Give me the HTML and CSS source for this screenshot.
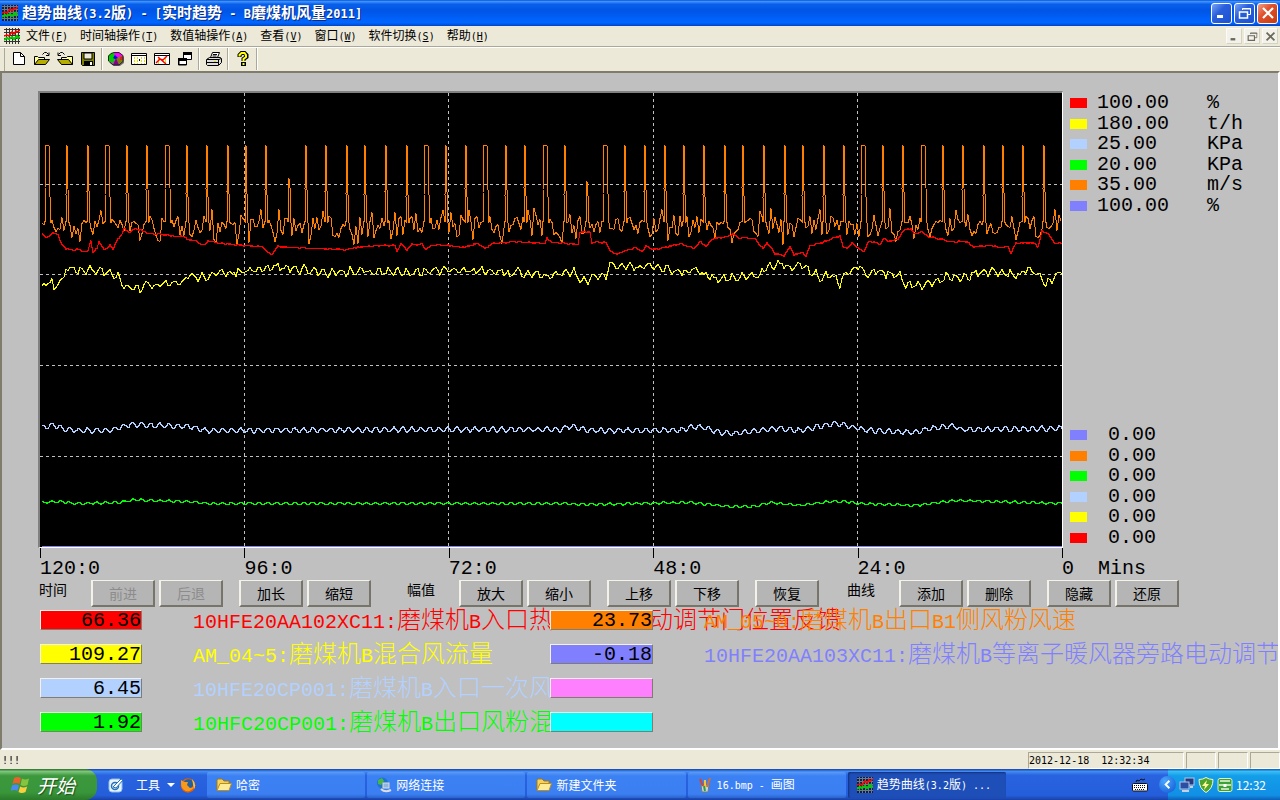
FILE: index.html
```html
<!DOCTYPE html>
<html lang="zh-CN">
<head>
<meta charset="utf-8">
<title>趋势曲线(3.2版)</title>
<link rel="stylesheet" href="styles.css">
</head>
<body>
<svg class="sprite" aria-hidden="true">
  <symbol id="i-trend" viewBox="0 0 16 16">
    <path d="M2.5 0v16M5.500 0v16M8.500 0v16M11.500 0v16M14.500 0v16M0 1.500h16M0 4.500h16M0 7.500h16M0 10.500h16M0 13.500h16" fill="none"/>
    <path d="M0 8l3-1 2 1 3-4 2 2 2-3 1 1 3-2" stroke="#f00" stroke-width="1.500" fill="none"/>
    <path d="M0 12l3-2 2 1 3-2 2 2 3-3 1 2 2-1" stroke="#0c0" stroke-width="2" fill="none"/>
  </symbol>
  <symbol id="i-new" viewBox="0 0 16 16"><path d="M2.500 1.500h7l4 4v8h-11z" fill="#fff" stroke="#000"/><path d="M9.500 1.500v4h4" fill="none" stroke="#000"/></symbol>
  <symbol id="i-open" viewBox="0 0 16 16"><path d="M.5 13.500v-8h3l1 1h6v3" fill="#ffff9c" stroke="#000"/><path d="M.5 13.500l4-5h11l-4 5z" fill="#b5ad00" stroke="#000"/><path d="M8.500 3.500l2-2h2l2 2M15 1.500v3h-3" fill="none" stroke="#000"/></symbol>
  <symbol id="i-open2" viewBox="0 0 16 16"><path d="M15.500 13.500v-8h-5l-1 1h-5v3" fill="#ffff9c" stroke="#000"/><path d="M15.500 13.500l-4-5h-11l4 5z" fill="#b5ad00" stroke="#000"/><path d="M7.500 3.500l-2-2h-2l-2 2M1 1.500v3h3" fill="none" stroke="#000"/></symbol>
  <symbol id="i-save" viewBox="0 0 16 16"><path d="M1.500 1.500h13v13h-12l-1-1z" fill="#808000" stroke="#000"/><path d="M4 2h8v6h-8z" fill="#ece9d8" stroke="#000"/><path d="M4 10h9v4H4z"/><path d="M10 11h2v3h-2z" fill="#fff"/></symbol>
  <symbol id="i-pie" viewBox="0 0 16 16"><path d="M2 6l4-3 5-1 5 4v6l-4 3H6l-4-3z" fill="#777"/><path d="M0 5l3-3h4l1 5-3 4-5-1z" fill="#0c0"/><path d="M7 7L6 1l6 1 3 3z" fill="#f0f"/><path d="M8 7l7-2v5l-4 3z" fill="#808000"/><path d="M8 7l3 7H5z" fill="#808"/><path d="M15 5v4h-3V6z" fill="#d22"/><path d="M7 4l3 3-3 1-2-1z" fill="#00f"/><path d="M3 2.500L6 1.500h5l4 3v6l-4 3.500H5L.5 10V5z" fill="none" stroke="#222"/></symbol>
  <symbol id="i-table" viewBox="0 0 16 16"><path d="M.5 2.500h15v11H.5z" fill="#fff" stroke="#000"/><path d="M1 4.500h14" stroke="#000"/><path d="M3.500 6v7M6.500 6v7M10.500 6v7M13.500 6v7" stroke="#dd0" stroke-dasharray="2 1"/><path d="M8 8h1v2H8z"/></symbol>
  <symbol id="i-tablex" viewBox="0 0 16 16"><path d="M.5 2.500h15v11H.5z" fill="#fff" stroke="#000"/><path d="M1 4.500h14" stroke="#000"/><path d="M4.500 6v7M11.500 6v7" stroke="#dd0"/><path d="M2 12l4-4 3 1 4-4M4 6l8 7" stroke="#f00" stroke-width="1.500" fill="none"/></symbol>
  <symbol id="i-cascade" viewBox="0 0 16 16"><path d="M6.500 2.500h8v6h-8z" fill="#fff" stroke="#000"/><path d="M6 1h9v3H6z"/><path d="M2 7.500h7.500v6H2z" fill="#fff" stroke="#000"/><path d="M1 7h9v3H1z"/><path d="M1.500 8v6h8V8" fill="none" stroke="#000"/></symbol>
  <symbol id="i-print" viewBox="0 0 16 16"><path d="M4.500 6.500l2-5h7l-2 5" fill="#fff" stroke="#000"/><path d="M7 3.500h4M6.500 5h4" stroke="#000"/><path d="M.5 8.500l3-2h11l1 1v4l-3 3h-11l-1-1z" fill="#ddd" stroke="#000"/><path d="M1 8.500h12l2-1M12.500 9v5M1 11.500h11" stroke="#000" fill="none"/><path d="M8 10h2v1H8z" fill="#dd0"/></symbol>
  <symbol id="i-help" viewBox="0 0 16 16"><path d="M4.500 6V4l2-2h3l2 2v2L8.500 8v2" fill="none" stroke="#000" stroke-width="4"/><path d="M6 11h5v4H6z"/><path d="M4.500 5.500V4l2-2h3l1.500 2v2L8.500 8v2" fill="none" stroke="#ff0" stroke-width="2"/><path d="M7.500 12h2v2h-2z" fill="#ff0"/></symbol>
  <symbol id="i-min" viewBox="0 0 14 14"><path d="M2 9h6v3H2z" fill="currentColor"/></symbol>
  <symbol id="i-restore" viewBox="0 0 14 14"><path d="M4.500 4V2.500h8v6H10M4 3h9" fill="none" stroke="currentColor"/><path d="M1.500 6h8v6h-8zM1 6h9" fill="none" stroke="currentColor" stroke-width="1.500"/></symbol>
  <symbol id="i-close" viewBox="0 0 14 14"><path d="M2 2l10 10M12 2L2 12" stroke="currentColor" stroke-width="2.200"/></symbol>
  <symbol id="i-flag" viewBox="0 0 20 18"><path d="M3 2q3-2 7 0l-1.500 6q-3-2-7 0z" fill="#e9622c"/><path d="M11 2.500q3 2 7 0L16.500 9q-4 2-7 0z" fill="#86c440"/><path d="M1 9.500q4-2 7 0L6.500 15q-3-2-7 0z" fill="#4b8bf0"/><path d="M9.200 10.500q3 2 7 0L14.500 16q-4 2-7 0z" fill="#fbcf3b"/></symbol>
  <symbol id="i-tool" viewBox="0 0 16 16"><rect x="1" y="2" width="13" height="13" rx="3" fill="#e8f3fc" stroke="#8fc0ea"/><circle cx="7" cy="9" r="3.500" fill="none" stroke="#2472b8" stroke-width="1.500"/><path d="M5 10l8-8 2 1-7 8z" fill="#fff" stroke="#2472b8"/></symbol>
  <symbol id="i-fox" viewBox="0 0 16 16"><circle cx="8" cy="8.500" r="7.200" fill="#e66000"/><circle cx="8.500" cy="7" r="4.800" fill="#245f9e"/><path d="M1 3l3 2 4 0-1 3 3 3 4-1q-3 5-8 4-5-2-5-8z" fill="#f79a1c"/><path d="M12 2q5 5 2 10l-1-5z" fill="#ffc531"/></symbol>
  <symbol id="i-folder" viewBox="0 0 16 16"><path d="M1 13V3l1-1h4l2 2h5v3" fill="#f6d25c" stroke="#a77b13"/><path d="M1 13.500L4 6.500h11.500L13 13.500z" fill="#ffec98" stroke="#bb8d1d"/></symbol>
  <symbol id="i-net" viewBox="0 0 16 16"><circle cx="6.500" cy="6" r="5.500" fill="#1f75c9"/><path d="M2 3l4-2 2 3-3 4-3-1z" fill="#49b548"/><rect x="7" y="6" width="6" height="5" fill="#8fb6df" stroke="#ddd"/><path d="M5 12q4 4 10 1" stroke="#ddd" stroke-width="2" fill="none"/></symbol>
  <symbol id="i-paint" viewBox="0 0 16 16"><path d="M4 8h8l-1 7H5z" fill="#c9d5d6" stroke="#6d7b80"/><path d="M6 9L3 2" stroke="#d8432b" stroke-width="2"/><path d="M8 10V3" stroke="#f2c53b" stroke-width="2"/><path d="M10 10l3-9" stroke="#d86d2c" stroke-width="2"/><path d="M7 9l1 5" stroke="#2b9d47" stroke-width="2"/></symbol>
  <symbol id="i-kbd" viewBox="0 0 16 14"><path d="M4 4l1-2 2 1 2-2 2 1 2-1" fill="none" stroke="#111"/><rect x=".5" y="5.500" width="15" height="7.500" rx="1" fill="#fff" stroke="#111"/><path d="M2 7.500h12M2 9.500h12M3 11.500h10" stroke="#111" stroke-dasharray="1 1"/></symbol>
  <symbol id="i-pcs" viewBox="0 0 16 16"><rect x="6" y="1" width="9" height="7" fill="#223a80" stroke="#b9c4e0"/><rect x="1" y="5" width="9" height="7" fill="#2c4da4" stroke="#b9c4e0"/><path d="M3 14h7M11 10h3" stroke="#c9cfe0" stroke-width="2"/></symbol>
  <symbol id="i-shield" viewBox="0 0 16 16"><path d="M8 .5q3 2 7 2 0 9-7 13-7-4-7-13 4 0 7-2z" fill="#4fa52b" stroke="#eef7d5"/><path d="M9 3L4 9h3l-1 4 5-6H8z" fill="#fff799"/></symbol>
  <symbol id="i-safe" viewBox="0 0 16 16"><rect x="1" y="1.500" width="14" height="13" rx="2" fill="#3da13a" stroke="#d9f0c8"/><path d="M3 4h10M2 8h12M4 12h8" stroke="#e9f7dd" stroke-width="1.500"/><path d="M6.500 7h3v3h-3z" fill="#fff"/></symbol>
</svg>

<header class="titlebar">
  <svg class="ico on-blue"><use href="#i-trend"/></svg>
  <h1>趋势曲线<span class="m">(3.2</span>版<span class="m">) - [</span>实时趋势<span class="m"> - B</span>磨煤机风量<span class="m">2011]</span></h1>
  <div class="winctl">
    <button aria-label="最小化"><svg><use href="#i-min"/></svg></button>
    <button aria-label="还原窗口"><svg><use href="#i-restore"/></svg></button>
    <button class="close" aria-label="关闭"><svg><use href="#i-close"/></svg></button>
  </div>
</header>

<nav class="menubar">
  <svg class="ico on-light"><use href="#i-trend"/></svg>
  <button>文件<span class="m">(<u>F</u>)</span></button>
  <button>时间轴操作<span class="m">(<u>T</u>)</span></button>
  <button>数值轴操作<span class="m">(<u>A</u>)</span></button>
  <button>查看<span class="m">(<u>V</u>)</span></button>
  <button>窗口<span class="m">(<u>W</u>)</span></button>
  <button>软件切换<span class="m">(<u>S</u>)</span></button>
  <button>帮助<span class="m">(<u>H</u>)</span></button>
  <div class="docctl">
    <button aria-label="最小化子窗口"><svg><use href="#i-min"/></svg></button>
    <button aria-label="还原子窗口"><svg><use href="#i-restore"/></svg></button>
    <button aria-label="关闭子窗口"><svg><use href="#i-close"/></svg></button>
  </div>
</nav>

<div class="toolbar" role="toolbar">
  <button aria-label="新建"><svg><use href="#i-new"/></svg></button>
  <button aria-label="打开"><svg><use href="#i-open"/></svg></button>
  <button aria-label="打开组"><svg><use href="#i-open2"/></svg></button>
  <button aria-label="保存"><svg><use href="#i-save"/></svg></button>
  <i class="sep"></i>
  <button aria-label="颜色"><svg><use href="#i-pie"/></svg></button>
  <button aria-label="网格"><svg><use href="#i-table"/></svg></button>
  <button aria-label="曲线"><svg><use href="#i-tablex"/></svg></button>
  <button aria-label="层叠"><svg><use href="#i-cascade"/></svg></button>
  <i class="sep"></i>
  <button aria-label="打印"><svg><use href="#i-print"/></svg></button>
  <i class="sep"></i>
  <button aria-label="帮助"><svg><use href="#i-help"/></svg></button>
  <i class="sep"></i>
</div>

<main class="client">
  <div class="trend">
    <div class="plot"><svg id="chart" viewBox="40 93 1022 454" preserveAspectRatio="none" role="img" aria-label="实时趋势"></svg></div>
    <div class="legend">
      <ul class="scale">
        <li><i class="sw red"></i><span>100.00</span><span>%</span></li>
        <li><i class="sw yellow"></i><span>180.00</span><span>t/h</span></li>
        <li><i class="sw sky"></i><span>25.00</span><span>KPa</span></li>
        <li><i class="sw green"></i><span>20.00</span><span>KPa</span></li>
        <li><i class="sw orange"></i><span>35.00</span><span>m/s</span></li>
        <li><i class="sw violet"></i><span>100.00</span><span>%</span></li>
      </ul>
      <ul class="scale low">
        <li><i class="sw violet"></i><span>0.00</span></li>
        <li><i class="sw orange"></i><span>0.00</span></li>
        <li><i class="sw green"></i><span>0.00</span></li>
        <li><i class="sw sky"></i><span>0.00</span></li>
        <li><i class="sw yellow"></i><span>0.00</span></li>
        <li><i class="sw red"></i><span>0.00</span></li>
      </ul>
    </div>
  </div>
  <div class="axis">
    <span>120:0</span><span>96:0</span><span>72:0</span><span>48:0</span><span>24:0</span><span>0&nbsp; Mins</span>
  </div>

  <div class="controls">
    <div class="set"><span class="name">时间</span>
      <div class="pair"><button disabled>前进</button><button disabled>后退</button></div>
      <div class="pair"><button>加长</button><button>缩短</button></div></div>
    <div class="set wide"><span class="name">幅值</span>
      <div class="pair"><button>放大</button><button>缩小</button></div>
      <div class="pair"><button>上移</button><button>下移</button></div>
      <div class="pair"><button>恢复</button></div></div>
    <div class="set"><span class="name">曲线</span>
      <div class="pair"><button>添加</button><button>删除</button></div>
      <div class="pair"><button>隐藏</button><button>还原</button></div></div>
  </div>

  <div class="readings">
    <output class="val red" aria-labelledby="t1">66.36</output>
    <span id="t1" class="tag t-red"><span class="m">10HFE20AA102XC11:</span>磨煤机<span class="m">B</span>入口热<span class="rest">动调节门位置反馈</span></span>
    <output class="val orange" aria-labelledby="t2">23.73</output>
    <span id="t2" class="tag t-orange"><span class="m">AM_05~0:</span>磨煤机<span class="m">B</span>出口<span class="m">B1</span>侧风粉风速</span>

    <output class="val yellow" aria-labelledby="t3">109.27</output>
    <span id="t3" class="tag t-yellow"><span class="m">AM_04~5:</span>磨煤机<span class="m">B</span>混合风流量</span>
    <output class="val violet" aria-labelledby="t4">-0.18</output>
    <span id="t4" class="tag t-violet"><span class="m">10HFE20AA103XC11:</span>磨煤机<span class="m">B</span>等离子暖风器旁路电动调节</span>

    <output class="val sky" aria-labelledby="t5">6.45</output>
    <span id="t5" class="tag t-sky"><span class="m">10HFE20CP001:</span>磨煤机<span class="m">B</span>入口一次风</span>
    <output class="val pink"></output>
    <span class="tag"></span>

    <output class="val green" aria-labelledby="t6">1.92</output>
    <span id="t6" class="tag t-green"><span class="m">10HFC20CP001:</span>磨煤机<span class="m">B</span>出口风粉混</span>
    <output class="val cyan"></output>
    <span class="tag"></span>
  </div>
</main>

<div class="status">
  <span class="msg m">!!!</span>
  <span class="cell time m">2012-12-18&nbsp; 12:32:34</span>
  <span class="cell"></span><span class="cell"></span><span class="cell"></span>
</div>

<footer class="taskbar">
  <button class="start"><svg><use href="#i-flag"/></svg>开始</button>
  <div class="quick">
    <button aria-label="工具图标"><svg class="ico"><use href="#i-tool"/></svg></button>
    <button class="tools">工具<i class="caret"></i></button>
    <button aria-label="Firefox"><svg class="ico"><use href="#i-fox"/></svg></button>
  </div>
  <div class="tasks">
    <button><svg class="ico"><use href="#i-folder"/></svg><span>哈密</span></button>
    <button><svg class="ico"><use href="#i-net"/></svg><span>网络连接</span></button>
    <button><svg class="ico"><use href="#i-folder"/></svg><span>新建文件夹</span></button>
    <button><svg class="ico"><use href="#i-paint"/></svg><span><span class="m">16.bmp - </span>画图</span></button>
    <button class="active"><svg class="ico on-blue"><use href="#i-trend"/></svg><span>趋势曲线<span class="m">(3.2</span>版<span class="m">) ...</span></span></button>
  </div>
  <svg class="ico kbd"><use href="#i-kbd"/></svg>
  <div class="tray">
    <button class="expand" aria-label="展开"><svg viewBox="0 0 18 18"><path d="M11 5L7 9l4 4" fill="none" stroke="#fff" stroke-width="2"/></svg></button>
    <svg class="ico"><use href="#i-pcs"/></svg>
    <svg class="ico"><use href="#i-shield"/></svg>
    <svg class="ico"><use href="#i-safe"/></svg>
    <time>12:32</time>
  </div>
</footer>
<script src="chart.js"></script>
</body>
</html>
```

FILE: styles.css
```css
* { box-sizing: border-box; }
body {
  margin: 0;
  min-height: 100vh;
  display: flex;
  flex-direction: column;
  background: #ece9d8;
  color: #000;
  font: 12px/16px "Noto Sans CJK SC", sans-serif;
}
button {
  font: inherit;
  color: inherit;
  background: none;
  border: 0;
  padding: 0;
  white-space: nowrap;
}
ul { list-style: none; margin: 0; padding: 0; }
.sprite { position: absolute; width: 0; height: 0; }
.ico { width: 16px; height: 16px; flex: none; }
.m { font-family: "DejaVu Sans Mono", monospace; font-size: 10px; white-space: pre; }
.on-blue { stroke: #6b7a8c; background: #10203c; }
.on-light { stroke: #333; }

/* title bar */
.titlebar {
  height: 26px;
  display: flex;
  align-items: center;
  padding: 0 2px;
  gap: 4px;
  color: #fff;
  background: linear-gradient(#0a4fd8 0, #3d95ff 6%, #0a5fea 16%, #0055e5 40%, #0062fb 75%, #0066ff 88%, #0044c4 100%);
}
.titlebar h1 {
  flex: 1;
  margin: 0;
  font-size: 15px;
  line-height: 22px;
  font-weight: bold;
  text-shadow: 1px 1px #0a2a80;
  white-space: nowrap;
}
.titlebar h1 .m { font-size: 12px; }
.winctl { display: flex; gap: 2px; }
.winctl button {
  width: 21px;
  height: 21px;
  display: grid;
  place-items: center;
  border: 1px solid #fff;
  border-radius: 3px;
  background: linear-gradient(135deg, #7ba4f5, #2a5fdc 40%, #1c50d0);
}
.winctl .close { background: linear-gradient(135deg, #f0a088, #e0512c 40%, #c83a10); }
.winctl svg { width: 14px; height: 14px; }

/* menu bar */
.menubar {
  height: 20px;
  display: flex;
  align-items: center;
  gap: 12px;
  padding: 0 2px 0 4px;
}
.menubar > .ico { margin-right: -6px; }
.docctl { margin-left: auto; display: flex; gap: 2px; }
.docctl button {
  width: 16px;
  height: 16px;
  display: grid;
  place-items: center;
  color: #6b695c;
  background: #f3f2ea;
  border: 1px solid #fbfaf6;
  border-right-color: #d6d2c2;
  border-bottom-color: #d6d2c2;
}
.docctl svg { width: 11px; height: 11px; }

/* tool bar */
.toolbar {
  height: 25px;
  display: flex;
  align-items: center;
  padding-left: 7px;
  border-top: 1px solid #aca899;
  box-shadow: inset 0 1px #fff, inset 4px 0 #ece9d8, inset 5px 0 #aca899;
}
.toolbar button { width: 23px; height: 22px; display: grid; place-items: center; }
.toolbar svg { width: 16px; height: 16px; }
.sep {
  width: 2px;
  height: 22px;
  margin: 0 2px;
  background: linear-gradient(90deg, #aca899 50%, #fff 50%);
}
.sep:first-of-type { margin: 0 1px 0 2px; }

/* trend view */
.client {
  flex: 1;
  overflow: hidden;
  padding: 18px 0 12px 36px;
  background: #c0c0c0;
  border: 2px solid #7f7c6b;
  border-right-color: #fff;
  border-bottom-color: #fff;
  font: 20px/20px "Liberation Mono", "Noto Sans CJK SC", monospace;
}
.trend { display: flex; gap: 7px; }
.plot {
  flex: 1;
  background: #000;
  border: 2px solid #808080;
  border-right: 1px solid #fff;
  border-bottom: 1px solid #fff;
}
.plot svg { display: block; width: 100%; height: 454px; }
#chart path {
  fill: none;
  stroke-width: 1px;
  vector-effect: non-scaling-stroke;
  shape-rendering: crispEdges;
}
#chart .rule { stroke: #c0c0c0; stroke-dasharray: 3 3; }
#chart .s-orange { stroke: #ff8000; }
#chart .s-red { stroke: #f00; }
#chart .s-yellow { stroke: #ff0; }
#chart .s-sky { stroke: #b3d1ff; }
#chart .s-green { stroke: #0f0; }
#chart .s-violet { stroke: #8080ff; }
.legend {
  width: 208px;
  padding: 2px 0 0;
  display: flex;
  flex-direction: column;
  justify-content: space-between;
}
.scale { display: grid; grid-auto-rows: 1fr; height: 123px; }
.scale li { display: grid; grid-template-columns: 17px 100px 1fr; column-gap: 10px; align-items: center; line-height: 20px; }
.scale.low li { column-gap: 21px; }
.sw { height: 10px; }
.red { background: #f00; }
.yellow { background: #ff0; }
.sky { background: #b3d1ff; }
.green { background: #0f0; }
.orange { background: #ff8000; }
.violet { background: #8080ff; }
.pink { background: #ff80ff; }
.cyan { background: #0ff; }

.axis { display: grid; grid-template-columns: repeat(5, 1fr) 216px; padding-left: 2px; }
.axis span {
  padding-top: 11px;
  line-height: 20px;
  background: linear-gradient(#000, #000) 0 0 / 1px 10px no-repeat;
}

.controls {
  display: flex;
  gap: 36px;
  padding: 1px 0 0 1px;
  font: 14px/20px "Noto Sans CJK SC", sans-serif;
}
.set { display: flex; gap: 16px; }
.set.wide { margin-right: -8px; }
.name { width: 36px; line-height: 18px; white-space: nowrap; }
.pair { display: flex; gap: 4px; }
.pair button {
  width: 64px;
  height: 27px;
  background: #b5b5b5;
  border: 2px solid #f4f2e8;
  border-top-width: 1px;
  border-right-color: #77746a;
  border-bottom-color: #77746a;
}
.pair button:disabled { color: #8c8c8c; }

.readings {
  display: grid;
  grid-template-columns: 102px 306px 103px 1fr;
  grid-auto-rows: 20px;
  gap: 14px 51px;
  padding: 3px 0 0 2px;
}
.val {
  position: relative;
  z-index: 1;
  text-align: right;
  line-height: 20px;
  border: 1px solid #f4f2e8;
  border-right-color: #807d70;
  border-bottom-color: #807d70;
}
.tag {
  min-width: 0;
  white-space: nowrap;
  font: 300 24px/16px "Noto Sans CJK SC", sans-serif;
}
.tag .m { font-family: "Liberation Mono", monospace; font-size: 20px; font-weight: normal; }
.rest { margin-left: 96px; }
.t-red { color: #f00; }
.t-orange { color: #ff8000; }
.t-yellow { color: #ff0; }
.t-violet { color: #8080ff; }
.t-sky { color: #b3d1ff; }
.t-green { color: #0f0; }

/* status bar */
.status { height: 19px; display: flex; align-items: stretch; gap: 2px; padding: 2px 0 0 2px; }
.status .msg { flex: 1; line-height: 18px; }
.cell {
  width: 30px;
  border: 1px solid #aca899;
  border-right-color: #fff;
  border-bottom-color: #fff;
}
.cell.time { width: 156px; line-height: 16px; }

/* task bar */
.taskbar {
  height: 31px;
  display: flex;
  align-items: stretch;
  color: #fff;
  background: linear-gradient(#1941a5 0, #3f8cf3 8%, #2a63df 20%, #245edb 85%, #1941a5 100%);
}
.start {
  width: 97px;
  display: flex;
  align-items: center;
  gap: 6px;
  padding-left: 11px;
  border-radius: 0 12px 12px 0;
  font-size: 19px;
  font-style: italic;
  text-shadow: 1px 1px 1px #1b4d1b;
  background: linear-gradient(#2c6e2c 0, #7dc57d 8%, #3c983c 22%, #3a963a 75%, #2a7a2a 100%);
}
.start svg { width: 20px; height: 18px; }
.quick { width: 110px; display: flex; align-items: center; gap: 5px; padding-left: 11px; }
.quick button { display: flex; align-items: center; }
.quick .tools { padding-left: 7px; gap: 7px; }
.caret { border: 4px solid transparent; border-top-color: #fff; border-bottom: 0; }
.tasks { flex: 1; max-width: 799px; display: flex; gap: 2px; padding: 3px 0 2px; }
.tasks button {
  flex: 1;
  display: flex;
  align-items: center;
  gap: 4px;
  padding-left: 9px;
  border-radius: 2px;
  background: linear-gradient(#5a9af8, #3c81f3 15%, #3b7ff2 85%, #2c62cc);
}
.tasks .active { background: #1e4fb8; box-shadow: inset 1px 1px 2px #12307c; }
.kbd { margin: 8px 11px 0 auto; }
.tray {
  width: 121px;
  display: flex;
  align-items: center;
  gap: 3px;
  background: linear-gradient(#0c59b9 0, #38bdf5 8%, #139ee9 22%, #118fe5 85%, #0c5fb8 100%) right / 112px 100% no-repeat;
}
.expand {
  width: 17px;
  height: 17px;
  border-radius: 50%;
  background: radial-gradient(circle at 35% 30%, #4aa8ff, #0f52d0);
}
.expand svg { display: block; }
.tray time { font-size: 12px; }
```

FILE: chart.js
```js
const svg = document.getElementById('chart');

function draw(cls, d) {
  const path = document.createElementNS('http://www.w3.org/2000/svg', 'path');
  path.setAttribute('class', cls);
  path.setAttribute('d', d);
  svg.appendChild(path);
}

function toPath(points) {
  return 'M' + points.map(([x, y]) => x + ' ' + y).join('L');
}

let seed = 7;
function rand() {
  seed = (seed * 16807) % 2147483647;
  return seed / 2147483647;
}

function level(keys, x) {
  for (let i = 2; i < keys.length; i += 2) {
    if (x <= keys[i]) {
      const t = (x - keys[i - 2]) / (keys[i] - keys[i - 2]);
      return keys[i - 1] + t * (keys[i + 1] - keys[i - 1]);
    }
  }
  return keys[keys.length - 1];
}

function ripple(keys, step, period, amp, noise) {
  const points = [];
  for (let x = 42; x <= 1062; x += step) {
    const wave = Math.sin(x * 2 * Math.PI / period) * amp;
    const y = level(keys, x) + wave + (rand() - 0.5) * noise;
    points.push([x, Math.round(y) + 0.5]);
  }
  return toPath(points);
}

const red = [42,234,46,237,49,236,53,232,58,234,61,243,66,248,70,249,80,249,82,251,88,251,91,240,93,252,97,248,99,241,105,250,110,244,113,249,118,238,122,234,124,228,130,232,135,228,142,230,148,233,163,234,176,236,182,235,187,239,195,240,200,243,205,244,208,240,218,243,237,244,244,245,262,246,267,251,272,254,278,246,290,247,320,248,345,249,365,246,380,245,395,245,397,251,401,243,407,249,412,244,422,244,426,249,434,244,448,245,464,247,478,243,485,248,492,243,515,241,545,243,547,238,552,242,578,244,580,232,590,231,592,243,597,240,600,243,606,241,610,250,617,254,624,251,635,247,642,251,646,246,654,249,668,246,680,243,694,248,700,241,706,246,713,238,720,237,728,236,733,233,738,237,755,238,763,248,767,242,775,253,784,255,790,246,794,254,803,252,806,256,810,245,823,242,840,235,843,246,847,248,852,243,864,251,868,241,877,242,880,245,884,237,888,241,898,239,903,230,911,228,915,234,922,231,928,236,950,241,967,241,973,246,990,245,1000,247,1008,246,1011,252,1016,243,1030,242,1035,243,1038,247,1042,231,1048,233,1055,243,1062,243];
const yellow = [42,284,46,288,49,278,52,280,54,292,58,280,64,280,66,268,100,270,110,271,118,277,123,286,130,287,135,289,141,290,145,285,170,284,182,282,188,275,200,277,215,274,244,271,260,270,275,266,300,269,330,272,360,270,380,272,450,270,505,271,510,277,515,271,525,275,533,272,545,276,575,271,580,280,588,281,595,276,606,275,610,265,625,265,640,267,655,266,670,270,685,272,695,268,705,275,718,280,730,277,760,275,763,268,783,263,788,267,800,263,810,270,820,276,833,276,840,283,845,272,858,266,870,276,875,269,885,273,900,273,905,284,922,286,935,280,950,276,965,277,980,271,1000,271,1020,275,1025,268,1040,274,1045,284,1055,277,1062,271];
const sky = [42,427,55,425,65,429,80,430,110,430,130,424,150,425,190,426,205,430,450,429,560,429,570,426,590,430,680,430,695,426,705,427,720,432,735,433,775,428,800,430,820,426,835,423,850,426,870,430,915,432,930,428,955,425,960,429,1062,428];
const green = [42,502,60,501,75,503,120,502,136,499,145,500,190,501,205,503,450,503,560,503,590,504,690,502,730,506,755,506,770,502,800,505,830,501,845,501,860,503,915,505,955,500,1062,503];

// Spikes: position, width of the flat top, top level.
const spikes = [[46,3],[67],[88],[106,3],[127],[147],[166,3],[187],[207],[228],[246],[266],[289,0,178],[306],[326],[347],[365],[386],[407],[425,3],[446],[466],[484,3],[506],[525],[544,3],[565],[587,0,181],[604,3],[625],[645],[665],[684],[704],[725],[743],[764],[785],[803],[824],[844],[862,3],[883],[903],[922,3],[943],[963],[984],[1003],[1023],[1044]];

function spikeTrace() {
  const points = [[42, 223.5], [44, 224.5]];
  spikes.forEach(([x, flat = 0, top = 145], i) => {
    const end = x + flat;
    points.push([x - 1, 221.5], [x - 1, 188 + Math.round(rand() * 10)], [x, top + 0.5]);
    if (flat) points.push([end, top + 0.5]);
    points.push([end + 1, 188 + Math.round(rand() * 10)], [end + 2, 222.5]);
    const next = i + 1 < spikes.length ? spikes[i + 1][0] - 2 : 1062;
    for (let px = end + 3; px <= next; px += 2) {
      const reach = rand() > 0.75 ? 36 : 21;
      points.push([px, Math.round(226 + (rand() - 0.5) * reach) + 0.5]);
    }
  });
  return toPath(points);
}

[184.5, 274.5, 365.5, 456.5].forEach(y => draw('rule', `M40 ${y}H1062`));
[244.5, 448.5, 653.5, 857.5].forEach(x => draw('rule', `M${x} 93V547`));
draw('s-orange', spikeTrace());
draw('s-red', ripple(red, 1, 9, 0.3, 1));
draw('s-yellow', ripple(yellow, 2, 9.300, 3, 4.500));
draw('s-sky', ripple(sky, 1, 9, 2.300, 1.200));
draw('s-green', ripple(green, 1, 9, 1, 0.6));
draw('s-violet', 'M42 546.5H1062');
```
